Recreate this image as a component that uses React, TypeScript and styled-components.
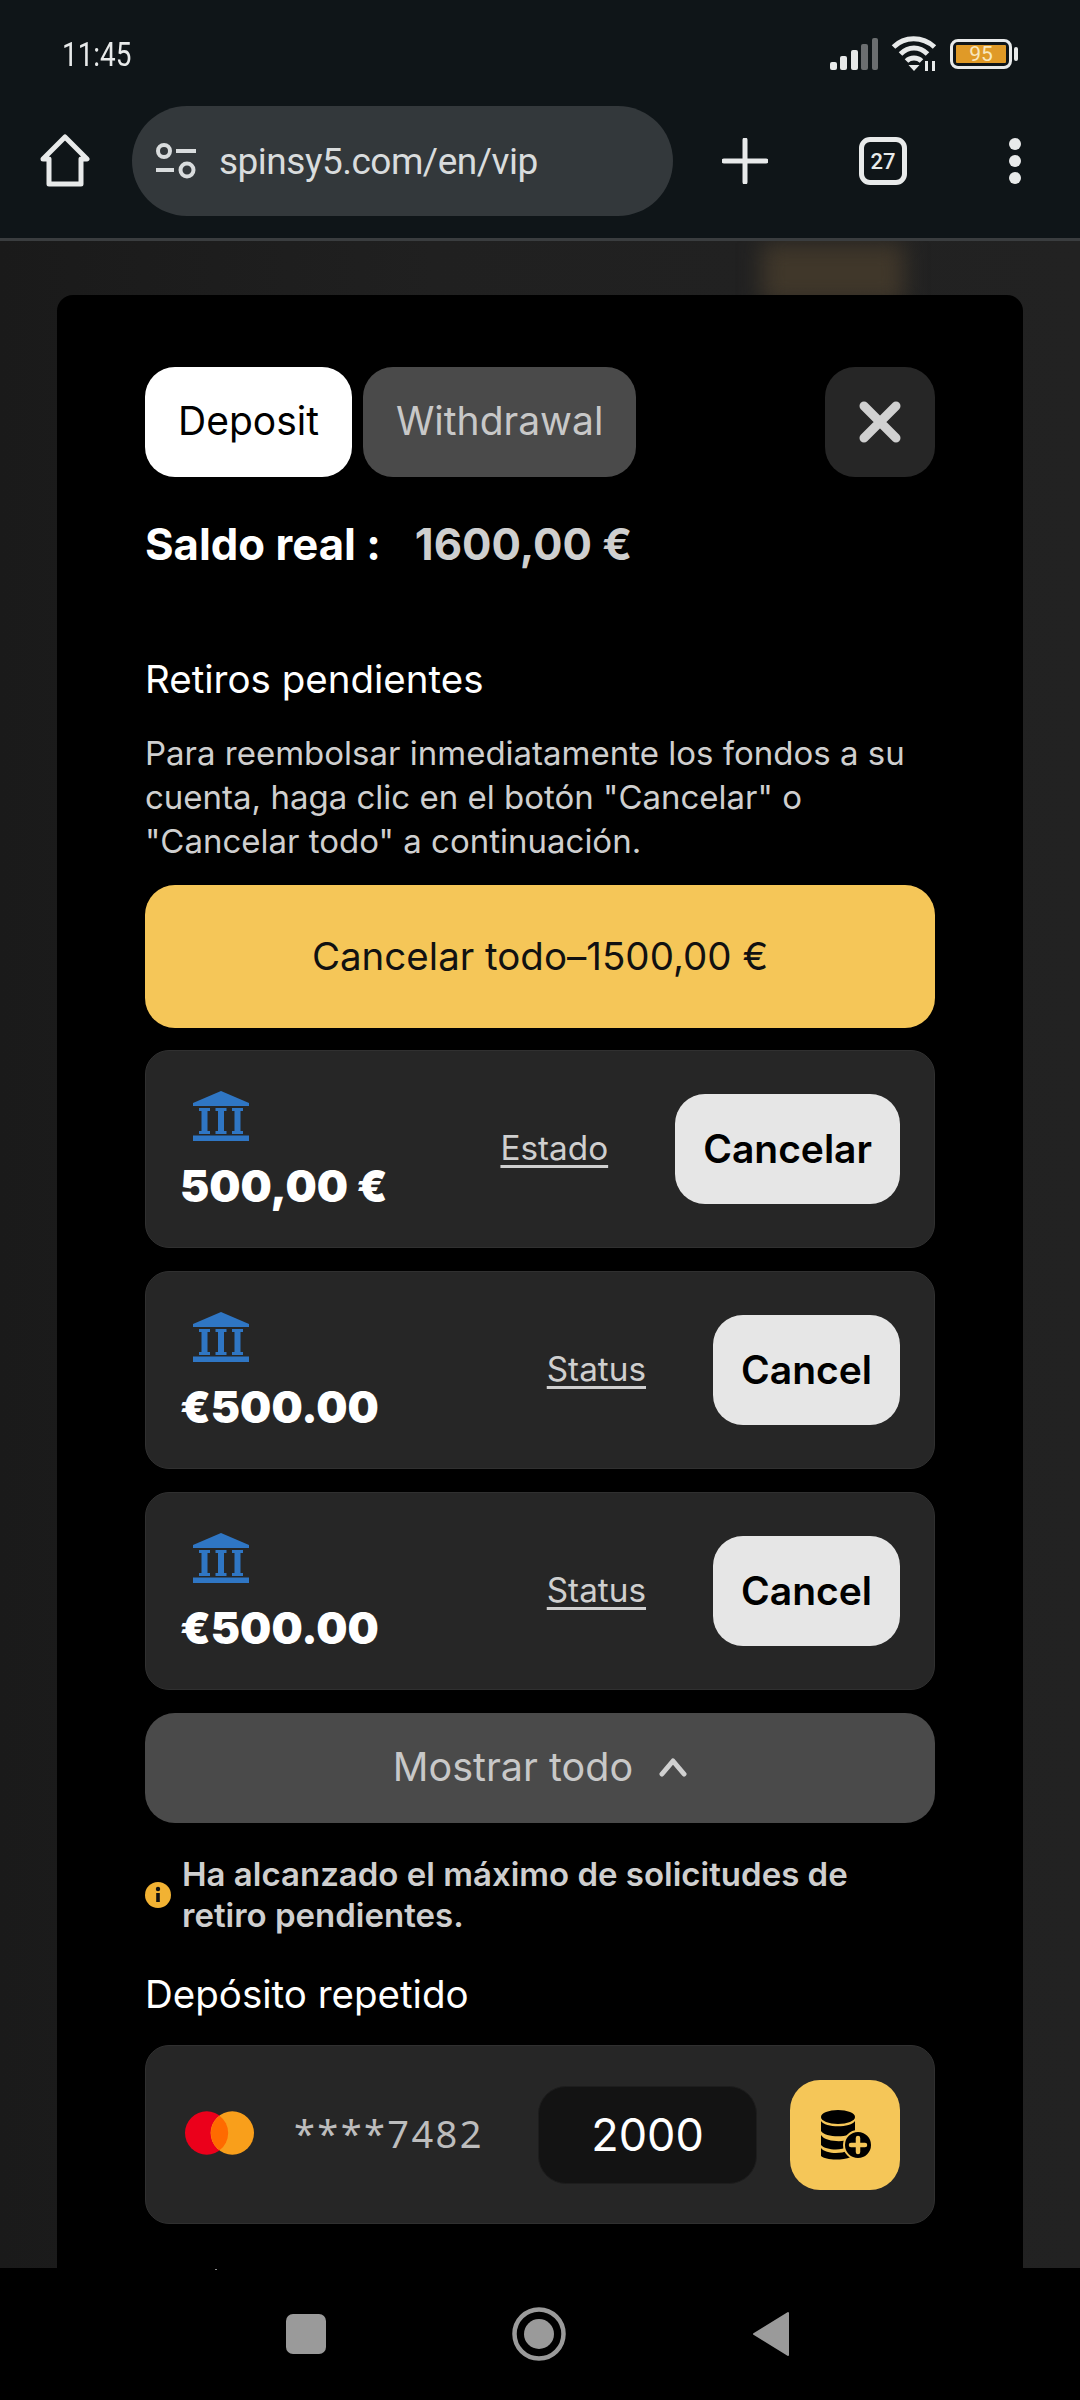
import React from "react";
import styled, { createGlobalStyle } from "styled-components";

const GlobalStyle = createGlobalStyle`
  html, body {
    margin: 0;
    padding: 0;
    background: #000;
  }
  * {
    box-sizing: border-box;
  }
`;

const Screen = styled.div`
  width: 1080px;
  height: 2400px;
  display: flex;
  flex-direction: column;
  overflow: hidden;
  font-family: Inter, "Liberation Sans", sans-serif;
  color: #fff;
`;

const StatusBar = styled.div`
  height: 106px;
  flex: none;
  background: #0f1518;
  display: flex;
  align-items: center;
  justify-content: space-between;
  padding: 2px 62px 0 62px;
`;

const Clock = styled.span`
  font-family: Roboto, sans-serif;
  font-size: 34px;
  color: #e8eaea;
  transform: scaleX(0.82);
  transform-origin: left center;
`;

const StatusIcons = styled.div`
  display: flex;
  align-items: center;
  gap: 13px;
`;

const Battery = styled.div`
  display: flex;
  align-items: center;
  gap: 2px;
`;

const BatteryBody = styled.div`
  width: 62px;
  height: 30px;
  border: 3px solid #e8eaea;
  border-radius: 8px;
  padding: 3px;
  display: flex;
`;

const BatteryFill = styled.div`
  flex: 1;
  background: #e09a27;
  border-radius: 1px;
  color: #f8e8c0;
  font-family: Roboto, sans-serif;
  font-size: 21px;
  line-height: 18px;
  text-align: center;
`;

const BatteryCap = styled.div`
  width: 4px;
  height: 14px;
  border-radius: 2px;
  background: #e8eaea;
`;

const Toolbar = styled.div`
  height: 132px;
  flex: none;
  background: #0f1518;
  display: flex;
  align-items: flex-start;
  padding: 0 0 0 40px;
`;

const HomeSlot = styled.div`
  width: 92px;
  height: 110px;
  display: flex;
  align-items: center;
`;

const AddressBar = styled.div`
  width: 541px;
  height: 110px;
  border-radius: 55px;
  background: #33383b;
  display: flex;
  align-items: center;
  gap: 23px;
  padding: 0 0 0 24px;
  font-family: Roboto, sans-serif;
  font-size: 37px;
  letter-spacing: -0.5px;
  color: #d9dcdd;
`;

const ToolbarActions = styled.div`
  height: 110px;
  display: flex;
  align-items: center;
  padding-left: 49px;
  gap: 91px;
`;

const TabCount = styled.div`
  width: 48px;
  height: 48px;
  border: 5px solid #e8eaea;
  border-radius: 11px;
  font-family: Roboto, sans-serif;
  font-size: 22px;
  font-weight: 500;
  color: #e8eaea;
  display: flex;
  align-items: center;
  justify-content: center;
`;

const MenuDots = styled.svg`
  width: 14px;
  height: 46px;
  margin-left: 10px;
`;

const Divider = styled.div`
  height: 3px;
  flex: none;
  background: #3a3d3f;
`;

const Page = styled.div`
  flex: 1;
  min-height: 0;
  position: relative;
  overflow: hidden;
  background: linear-gradient(90deg, #1a1a1a 0, #202020 40%, #222222 100%);
  padding: 54px 57px 0;
`;

const Glow = styled.div`
  position: absolute;
  left: 762px;
  top: 2px;
  width: 142px;
  height: 60px;
  background: #40372a;
  filter: blur(11px);
`;

const Modal = styled.div`
  position: relative;
  height: 100%;
  background: #000;
  border-radius: 16px 16px 0 0;
  padding: 72px 88px 0;
  display: flex;
  flex-direction: column;
`;

const TabRow = styled.div`
  display: flex;
  gap: 11px;
`;

const Tab = styled.div<{ $active?: boolean }>`
  height: 110px;
  padding: 0 33px 3px;
  border-radius: 30px;
  background: ${(p) => (p.$active ? "#fff" : "#4a4a4a")};
  color: ${(p) => (p.$active ? "#000" : "#c8c8c8")};
  font-size: 39px;
  display: flex;
  align-items: center;
`;

const CloseButton = styled.div`
  margin-left: auto;
  width: 110px;
  height: 110px;
  border-radius: 30px;
  background: #262626;
  display: flex;
  align-items: center;
  justify-content: center;
`;

const Balance = styled.div`
  margin-top: 42px;
  display: flex;
  gap: 34px;
  font-size: 43.7px;
  line-height: 51px;
  font-weight: 700;
`;

const BalanceValue = styled.span`
  color: #cfcfcf;
`;

const SectionTitle = styled.div<{ $top: number }>`
  margin-top: ${(p) => p.$top}px;
  font-size: 38.5px;
  line-height: 44px;
  color: #fff;
`;

const Hint = styled.p`
  margin: 30px 0 0;
  font-size: 33px;
  line-height: 44px;
  color: #cfcfcf;
`;

const CancelAll = styled.div`
  margin-top: 22px;
  height: 143px;
  flex: none;
  border-radius: 30px;
  background: #f5c658;
  color: #111;
  font-size: 38.5px;
  padding-bottom: 2px;
  display: flex;
  align-items: center;
  justify-content: center;
`;

const RequestList = styled.div`
  margin-top: 22px;
  display: flex;
  flex-direction: column;
  gap: 23px;
`;

const Card = styled.div`
  height: 198px;
  flex: none;
  border-radius: 24px;
  background: #262626;
  border: 1px solid #303030;
  display: flex;
  align-items: center;
  padding: 0 34px;
`;

const CardInfo = styled.div`
  flex: 1;
  display: flex;
  flex-direction: column;
  align-items: flex-start;
  gap: 20px;
  padding-top: 3px;
`;

const BankIcon = styled.svg`
  width: 56px;
  height: 50px;
  margin-left: 13px;
`;

const Amount = styled.div`
  font-size: 44px;
  line-height: 50px;
  font-weight: 900;
  color: #fff;
`;

const StatusLink = styled.span`
  margin-right: 67px;
  padding-bottom: 2px;
  font-size: 33.3px;
  color: #cfcfcf;
  text-decoration: underline;
  text-underline-offset: 5px;
`;

const CancelButton = styled.div`
  height: 110px;
  padding: 0 28px 2px;
  border-radius: 30px;
  background: #e6e6e6;
  color: #000;
  font-size: 39px;
  font-weight: 600;
  display: flex;
  align-items: center;
`;

const ShowAll = styled.div`
  margin-top: 23px;
  height: 110px;
  flex: none;
  border-radius: 30px;
  background: #4a4a4a;
  color: #c8c8c8;
  font-size: 39.5px;
  padding-bottom: 3px;
  display: flex;
  align-items: center;
  justify-content: center;
  gap: 26px;
`;

const Notice = styled.div`
  margin-top: 31px;
  display: flex;
  align-items: center;
  gap: 11px;
  font-size: 33px;
  line-height: 41px;
  font-weight: 600;
  color: #cfcfcf;
`;

const NoticeText = styled.span`
  max-width: 700px;
`;

const InfoDot = styled.svg`
  flex: none;
  width: 26px;
  height: 26px;
`;

const RepeatCard = styled(Card)`
  margin-top: 29px;
  height: 179px;
`;

const CardBrand = styled.svg`
  width: 69px;
  height: 44px;
  margin-left: 5px;
  margin-top: -4px;
`;

const CardMask = styled.span`
  margin-left: 40px;
  padding-bottom: 3px;
  flex: 1;
  font-family: "Noto Sans", Inter, sans-serif;
  font-size: 38px;
  letter-spacing: 2.4px;
  color: #bdbdbd;
`;

const AmountField = styled.div`
  width: 219px;
  height: 98px;
  border-radius: 28px;
  background: #131313;
  border: 1px solid #1d1d1d;
  font-size: 45px;
  color: #fff;
  display: flex;
  align-items: center;
  justify-content: center;
`;

const RepeatButton = styled.div`
  margin-left: 33px;
  width: 110px;
  height: 110px;
  border-radius: 30px;
  background: #f5c658;
  display: flex;
  align-items: center;
  justify-content: center;
`;

const NavBar = styled.div`
  height: 132px;
  flex: none;
  position: relative;
  background: #000;
  display: flex;
  align-items: center;
  justify-content: center;
  gap: 186px;
  padding: 0 4px 0 0;
`;

const Speck = styled.span`
  position: absolute;
  left: 215px;
  top: 1px;
  width: 2px;
  height: 1px;
  background: #8a8a8a;
`;

const Bank = () => (
  <BankIcon viewBox="0 0 56 50" fill="#2f76c4">
    <path d="M28 0 L56 12 V15 H0 V12 Z" />
    <path d="M6 17 H17 V20 H14.5 V40 H17 V43 H6 V40 H8.5 V20 H6 Z" />
    <path d="M22.5 17 H33.5 V20 H31 V40 H33.5 V43 H22.5 V40 H25 V20 H22.5 Z" />
    <path d="M39 17 H50 V20 H47.5 V40 H50 V43 H39 V40 H41.5 V20 H39 Z" />
    <rect x="0" y="44.5" width="56" height="5.5" />
  </BankIcon>
);

const requests = [
  { id: 1, amount: "500,00 €", status: "Estado", action: "Cancelar" },
  { id: 2, amount: "€500.00", status: "Status", action: "Cancel" },
  { id: 3, amount: "€500.00", status: "Status", action: "Cancel" },
];

const App = () => {
  return (
    <Screen>
      <GlobalStyle />
      <StatusBar>
        <Clock>11:45</Clock>
        <StatusIcons>
          <svg width="48" height="32" viewBox="0 0 48 32">
            <rect x="0" y="24" width="7" height="8" rx="2" fill="#e8eaea" />
            <rect x="10" y="18" width="7" height="14" rx="2" fill="#e8eaea" />
            <rect x="21" y="12" width="7" height="20" rx="2" fill="#e8eaea" />
            <rect x="31" y="6" width="7" height="26" rx="2" fill="#6b6e70" />
            <rect x="42" y="0" width="6" height="32" rx="2" fill="#6b6e70" />
          </svg>
          <svg width="46" height="36" viewBox="1 0 45 36" fill="none" stroke="#e8eaea" strokeWidth="5">
            <path d="M3 11 C14 0 32 0 44 11" />
            <path d="M10 18 C18 10 29 10 37 18" />
            <path d="M16 25 C20 21 27 21 31 25" />
            <path d="M23.5 35 L18 29 H29 Z" fill="#e8eaea" stroke="none" />
            <path d="M36 25 V35 M43 25 V35" strokeWidth="3" />
          </svg>
          <Battery>
            <BatteryBody>
              <BatteryFill>95</BatteryFill>
            </BatteryBody>
            <BatteryCap />
          </Battery>
        </StatusIcons>
      </StatusBar>
      <Toolbar>
        <HomeSlot>
          <svg width="50" height="54" viewBox="0 0 50 54" fill="none" stroke="#e8eaea" strokeWidth="5" strokeLinejoin="round">
            <path d="M3 25 L25 3 L47 25 H41 V50 H9 V25 Z" />
          </svg>
        </HomeSlot>
        <AddressBar>
          <svg width="40" height="38" viewBox="0 0 40 38" fill="none" stroke="#d9dcdd" strokeWidth="4">
            <circle cx="8" cy="9" r="6" />
            <path d="M20 9 H40" />
            <circle cx="31" cy="28" r="6.5" />
            <path d="M0 28 H18" />
          </svg>
          spinsy5.com/en/vip
        </AddressBar>
        <ToolbarActions>
          <svg width="46" height="46" viewBox="0 0 46 46" stroke="#e8eaea" strokeWidth="5" strokeLinecap="round">
            <path d="M23 2 V44 M2 23 H44" />
          </svg>
          <TabCount>27</TabCount>
          <MenuDots viewBox="0 0 14 46" fill="#e8eaea">
            <circle cx="7" cy="6" r="6" />
            <circle cx="7" cy="23" r="6" />
            <circle cx="7" cy="40" r="6" />
          </MenuDots>
        </ToolbarActions>
      </Toolbar>
      <Divider />
      <Page>
        <Glow />
        <Modal>
          <TabRow>
            <Tab $active>Deposit</Tab>
            <Tab>Withdrawal</Tab>
            <CloseButton>
              <svg width="42" height="42" viewBox="0 0 42 42" stroke="#d0d0d0" strokeWidth="9" strokeLinecap="round">
                <path d="M5 5 L37 37 M37 5 L5 37" />
              </svg>
            </CloseButton>
          </TabRow>
          <Balance>
            <span>Saldo real :</span>
            <BalanceValue>1600,00 €</BalanceValue>
          </Balance>
          <SectionTitle $top={87}>Retiros pendientes</SectionTitle>
          <Hint>
            Para reembolsar inmediatamente los fondos a su cuenta, haga clic en el botón "Cancelar" o "Cancelar todo" a continuación.
          </Hint>
          <CancelAll>Cancelar todo–1500,00 €</CancelAll>
          <RequestList>
            {requests.map((r) => (
              <Card key={r.id}>
                <CardInfo>
                  <Bank />
                  <Amount>{r.amount}</Amount>
                </CardInfo>
                <StatusLink>{r.status}</StatusLink>
                <CancelButton>{r.action}</CancelButton>
              </Card>
            ))}
          </RequestList>
          <ShowAll>
            Mostrar todo
            <svg width="28" height="20" viewBox="0 0 28 20" fill="none" stroke="#d0d0d0" strokeWidth="5" strokeLinecap="round" strokeLinejoin="round">
              <path d="M3 17 L14 4 L25 17" />
            </svg>
          </ShowAll>
          <Notice>
            <InfoDot viewBox="0 0 26 26">
              <circle cx="13" cy="13" r="13" fill="#f2b233" />
              <rect x="11.2" y="11" width="3.6" height="9" fill="#111" />
              <circle cx="13" cy="7" r="2.2" fill="#111" />
            </InfoDot>
            <NoticeText>Ha alcanzado el máximo de solicitudes de retiro pendientes.</NoticeText>
          </Notice>
          <SectionTitle $top={36}>Depósito repetido</SectionTitle>
          <RepeatCard>
            <CardBrand viewBox="0 0 70 44">
              <circle cx="22" cy="22" r="22" fill="#eb001b" />
              <circle cx="48" cy="22" r="22" fill="#f99f1b" />
              <path d="M35 4.4 A22 22 0 0 1 35 39.6 A22 22 0 0 1 35 4.4 Z" fill="#ff6a00" />
            </CardBrand>
            <CardMask>****7482</CardMask>
            <AmountField>2000</AmountField>
            <RepeatButton>
              <svg width="56" height="50" viewBox="0 0 56 50">
                <ellipse cx="21" cy="7" rx="17" ry="7" fill="#000" />
                <path d="M4 11 C8 18 34 18 38 11 V21 C34 28 8 28 4 21 Z" fill="#000" />
                <path d="M4 25 C8 32 26 32 30 30 V37 C24 41 8 40 4 35 Z" fill="#000" />
                <path d="M4 38 C8 44 24 44 30 41 L34 47 C24 51 8 50 4 46 Z" fill="#000" />
                <circle cx="41" cy="35" r="14" fill="#000" stroke="#f5c658" strokeWidth="2" />
                <path d="M41 28 V42 M34 35 H48" stroke="#f5c658" strokeWidth="4.5" strokeLinecap="round" />
              </svg>
            </RepeatButton>
          </RepeatCard>
        </Modal>
      </Page>
      <NavBar>
        <Speck />
        <svg width="40" height="40" viewBox="0 0 40 40">
          <rect width="40" height="40" rx="7" fill="#9a9a9a" />
        </svg>
        <svg width="54" height="54" viewBox="0 0 54 54">
          <circle cx="27" cy="27" r="24.5" fill="none" stroke="#9a9a9a" strokeWidth="4.5" />
          <circle cx="27" cy="27" r="15" fill="#9a9a9a" />
        </svg>
        <svg width="38" height="46" viewBox="0 0 38 46">
          <path d="M36 2 V44 L2 23 Z" fill="#9a9a9a" stroke="#9a9a9a" strokeWidth="2" strokeLinejoin="round" />
        </svg>
      </NavBar>
    </Screen>
  );
};

export default App;
